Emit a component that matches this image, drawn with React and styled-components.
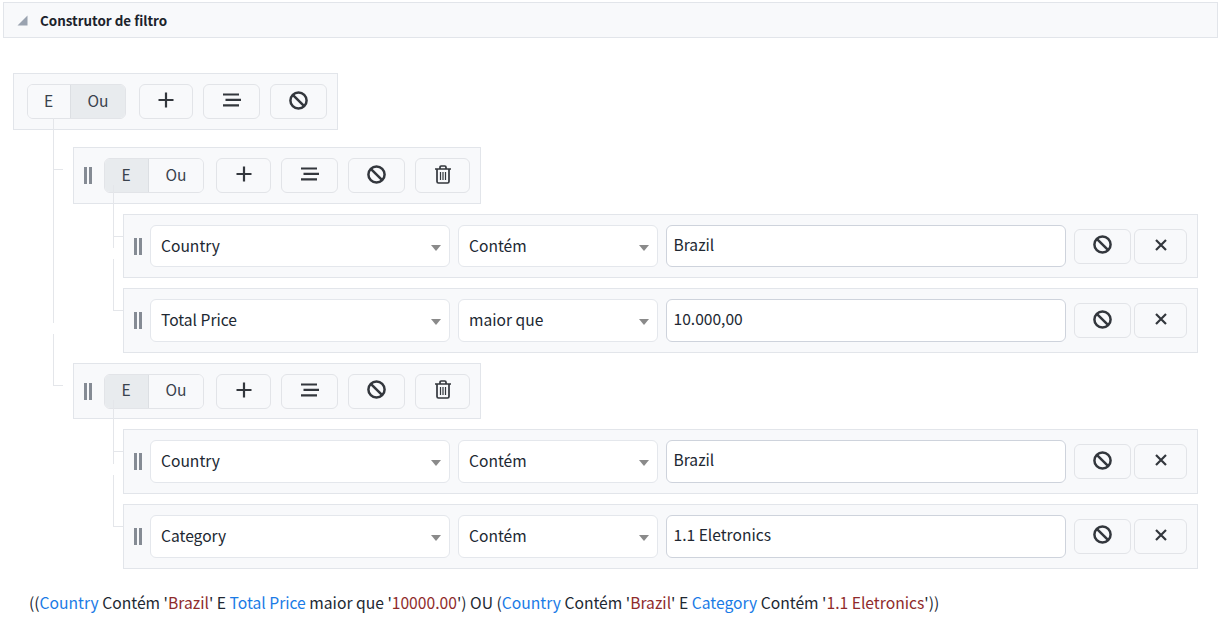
import React from "react";
import styled, { createGlobalStyle } from "styled-components";

const GlobalStyle = createGlobalStyle`
  html, body {
    margin: 0;
    padding: 0;
    background: #fff;
  }
  body {
    font-family: "Noto Sans CJK SC", "Noto Sans", sans-serif;
    color: #212832;
  }
`;

const Page = styled.div`
  width: 1219px;
  padding: 2px 1px 0 3px;
  box-sizing: border-box;
`;

const PanelHeader = styled.div`
  height: 36px;
  box-sizing: border-box;
  display: flex;
  align-items: center;
  gap: 12px;
  padding-left: 13px;
  background: #f8f9fb;
  border: 1px solid #e2e5ea;
  font-size: 13.4px;
  font-weight: 700;
  color: #1c232c;
`;

const Builder = styled.div`
  padding: 35px 20px 0 10px;
`;

const Bar = styled.div`
  display: flex;
  align-items: center;
  box-sizing: border-box;
  background: #f8f9fb;
  border: 1px solid #e2e5ea;
`;

const GroupBar = styled(Bar)`
  width: ${(p) => p.$width}px;
  height: ${(p) => (p.$root ? 57.4 : 56.4)}px;
  padding-left: ${(p) => (p.$root ? 13 : 10)}px;
`;

const RuleBar = styled(Bar)`
  height: 64.6px;
  padding-left: 10px;
`;

const Children = styled.div`
  display: flex;
  flex-direction: column;
  gap: 10px;
  margin-top: ${(p) => p.$top}px;
  margin-left: ${(p) => p.$indent}px;
`;

// connector lines of the tree
const Item = styled.div`
  position: relative;

  &::before {
    content: "";
    position: absolute;
    left: -${(p) => p.$reach}px;
    top: -29px;
    width: 10px;
    height: 52px;
    box-sizing: border-box;
    border-left: 1px solid #e4e6ea;
    border-bottom: 1px solid #e4e6ea;
  }

  &:not(:last-child)::after {
    content: "";
    position: absolute;
    left: -${(p) => p.$reach}px;
    top: 23px;
    bottom: 30px;
    border-left: 1px solid #e4e6ea;
  }
`;

const Handle = styled.span`
  width: 8px;
  height: 17px;
  margin-right: ${(p) => p.$space}px;
  flex: none;
  border-left: 3px solid #858b94;
  border-right: 3px solid #858b94;
  box-sizing: border-box;
`;

const Toggle = styled.div`
  display: flex;
  height: 35px;
  margin-right: ${(p) => p.$space}px;
  box-sizing: border-box;
  border: 1px solid #e2e4e8;
  border-radius: 6px;
  overflow: hidden;
`;

const ToggleOption = styled.div`
  display: flex;
  align-items: center;
  justify-content: center;
  box-sizing: border-box;
  width: ${(p) => p.$width}px;
  padding: 0 ${(p) => (p.$first ? 1 : 0)}px 4px 0;
  background: ${(p) => (p.$active ? "#e8ebee" : "#f8f9fb")};
  border-left: ${(p) => (p.$first ? "none" : "1px solid #dcdfe3")};
  font-size: 15.6px;
  line-height: 20px;
  color: #3a424d;
`;

const IconButton = styled.button`
  display: flex;
  align-items: center;
  justify-content: center;
  width: ${(p) => p.$width}px;
  height: 35px;
  margin-right: ${(p) => p.$space ?? 10}px;
  padding: 0 0 3px;
  flex: none;
  background: #f8f9fb;
  border: 1px solid #e2e4e8;
  border-radius: 6px;
  cursor: pointer;
`;

const Field = styled.div`
  display: flex;
  align-items: center;
  box-sizing: border-box;
  width: ${(p) => p.$width}px;
  height: 42.6px;
  margin-right: 8px;
  flex: none;
  background: #fff;
  border-radius: 6px;
  font-size: 15.6px;
  line-height: 22px;
  color: #212832;
`;

const SelectBox = styled(Field)`
  position: relative;
  padding: 0 0 3px 10px;
  border: 1px solid #e4e7ec;

  &::after {
    content: "";
    position: absolute;
    right: 8px;
    top: 19px;
    border-left: 5px solid transparent;
    border-right: 5px solid transparent;
    border-top: 6px solid #8a8a8a;
  }
`;

const ValueBox = styled(Field)`
  padding: 0 6.5px 5px;
  border: 1px solid #ced3dc;
`;

const Expression = styled.div`
  margin-top: 23px;
  margin-left: 16px;
  font-size: 15.67px;
  line-height: 22px;
  white-space: nowrap;
  color: #212832;
`;

const Column = styled.span`
  color: #1a7be6;
`;

const Literal = styled.span`
  color: #8f2b2b;
`;

const Glyph = styled.svg`
  display: block;
  fill: none;
  stroke: #33373d;
  stroke-width: ${(p) => p.$stroke ?? 2};
`;

const Collapse = () => (
  <svg width="11" height="11" viewBox="0 0 11 11">
    <polygon points="10.5,0.5 10.5,10.5 0.5,10.5" fill="#9aa3b0" />
  </svg>
);

const PlusIcon = () => (
  <Glyph width="16" height="16" viewBox="0 0 16 16" $stroke={2.2}>
    <path d="M8 .5v15M.5 8h15" />
  </Glyph>
);

const GroupIcon = () => (
  <Glyph width="18" height="14" viewBox="0 0 18 14" $stroke={2.2}>
    <path d="M0 1.500h16M2.500 6.800h15.500M0 12.300h16" />
  </Glyph>
);

const BanIcon = () => (
  <Glyph width="19" height="19" viewBox="0 0 19 19" $stroke={2.5}>
    <circle cx="9.500" cy="9.500" r="8.100" />
    <path d="M3.800 3.800l11.400 11.400" />
  </Glyph>
);

const TrashIcon = () => (
  <Glyph width="16" height="19" viewBox="0 0 16 19" $stroke={1.7}>
    <path d="M0 4h16M5 4V2.200Q5 1 6.200 1h3.600Q11 1 11 2.200V4" />
    <path d="M2 4v12.500Q2 18 3.500 18h9q1.500 0 1.500-1.500V4" />
    <path d="M5.500 7v8M8 7v8M10.500 7v8" strokeWidth="1.200" />
  </Glyph>
);

const CloseIcon = () => (
  <Glyph width="12" height="12" viewBox="0 0 12 12" $stroke={2.2}>
    <path d="M1 1l10 10M11 1L1 11" />
  </Glyph>
);

const Rule = ({ field, operator, value }) => (
  <Item $reach={10}>
    <RuleBar>
      <Handle $space={8} />
      <SelectBox $width={300}>{field}</SelectBox>
      <SelectBox $width={200}>{operator}</SelectBox>
      <ValueBox $width={400}>{value}</ValueBox>
      <IconButton $width={57} $space={3}><BanIcon /></IconButton>
      <IconButton $width={53} $space={0}><CloseIcon /></IconButton>
    </RuleBar>
  </Item>
);

const GroupToolbar = ({ active, root }) => (
  <>
    <Toggle $space={root ? 13 : 12}>
      <ToggleOption $first $width={root ? 42 : 43} $active={active === "E"}>E</ToggleOption>
      <ToggleOption $width={55} $active={active === "Ou"}>Ou</ToggleOption>
    </Toggle>
    <IconButton $width={root ? 54 : 55}><PlusIcon /></IconButton>
    <IconButton $width={57}><GroupIcon /></IconButton>
    <IconButton $width={57}><BanIcon /></IconButton>
  </>
);

const Group = ({ rules }) => (
  <Item $reach={20}>
    <GroupBar $width={408}>
      <Handle $space={12} />
      <GroupToolbar active="E" />
      <IconButton $width={55} $space={0}><TrashIcon /></IconButton>
    </GroupBar>
    <Children $top={10} $indent={50}>
      {rules.map((rule) => (
        <Rule key={rule.field} {...rule} />
      ))}
    </Children>
  </Item>
);

const groups = [
  {
    id: 1,
    rules: [
      { field: "Country", operator: "Contém", value: "Brazil" },
      { field: "Total Price", operator: "maior que", value: "10.000,00" },
    ],
  },
  {
    id: 2,
    rules: [
      { field: "Country", operator: "Contém", value: "Brazil" },
      { field: "Category", operator: "Contém", value: "1.1 Eletronics" },
    ],
  },
];

export default function App() {
  return (
    <Page>
      <GlobalStyle />
      <PanelHeader>
        <Collapse />
        Construtor de filtro
      </PanelHeader>
      <Builder>
        <GroupBar $root $width={325}>
          <GroupToolbar active="Ou" root />
        </GroupBar>
        <Children $top={17} $indent={60}>
          {groups.map((g) => (
            <Group key={g.id} rules={g.rules} />
          ))}
        </Children>
        <Expression>
          ((<Column>Country</Column> Contém '<Literal>Brazil</Literal>' E{" "}
          <Column>Total Price</Column> maior que '<Literal>10000.00</Literal>') OU (
          <Column>Country</Column> Contém '<Literal>Brazil</Literal>' E{" "}
          <Column>Category</Column> Contém '<Literal>1.1 Eletronics</Literal>'))
        </Expression>
      </Builder>
    </Page>
  );
}
